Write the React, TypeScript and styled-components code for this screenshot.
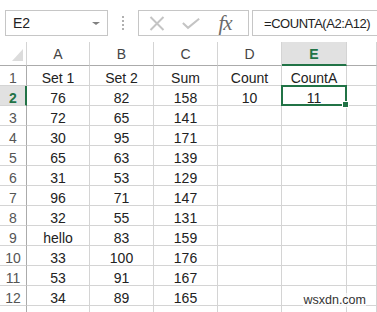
import React from "react";
import styled, { createGlobalStyle, css } from "styled-components";

const GlobalStyle = createGlobalStyle`
  html, body {
    margin: 0;
    padding: 0;
    background: #fff;
    overflow: hidden;
  }
  body {
    font-family: "Liberation Sans", Arial, sans-serif;
    color: #222;
  }
`;

const GREEN = "#217346";
const GRID = "#d4d4d4";

const Page = styled.div`
  position: relative;
  width: 377px;
  height: 312px;
  overflow: hidden;
`;

const Toolbar = styled.div`
  display: flex;
  align-items: flex-start;
  height: 42px;
  padding-top: 10px;
  box-sizing: border-box;
`;

const NameBox = styled.div`
  margin-left: 5px;
  width: 103px;
  height: 26px;
  box-sizing: border-box;
  border: 1px solid #c6c6c6;
  display: flex;
  align-items: center;
  justify-content: space-between;
  padding: 0 6px 0 7px;
  font-size: 14px;
  color: #222;
`;

const DropArrow = styled.span`
  width: 0;
  height: 0;
  border-left: 4px solid transparent;
  border-right: 4px solid transparent;
  border-top: 3px solid #808080;
  margin-right: 1px;
`;

const Dots = styled.div`
  width: 30px;
  height: 26px;
  display: flex;
  flex-direction: column;
  align-items: center;
  justify-content: center;
  gap: 2px;
  & span {
    width: 2px;
    height: 2px;
    background: #b0b0b0;
  }
`;

const FxBox = styled.div`
  width: 111px;
  height: 26px;
  box-sizing: border-box;
  border: 1px solid #c6c6c6;
  display: flex;
  align-items: center;
  padding-left: 9px;
`;

const IconSlot = styled.div<{ $w: number; $gap?: number }>`
  width: ${(p) => p.$w}px;
  margin-left: ${(p) => p.$gap ?? 0}px;
  height: 24px;
  display: flex;
  align-items: center;
  justify-content: center;
`;

const Fx = styled.span`
  font-family: "Liberation Serif", "Times New Roman", serif;
  font-style: italic;
  font-size: 21px;
  color: #6a6a6a;
  line-height: 24px;
  letter-spacing: -1px;
`;

const FormulaInput = styled.div`
  flex: 1;
  margin-left: 3px;
  height: 26px;
  box-sizing: border-box;
  border: 1px solid #c6c6c6;
  border-right: none;
  display: flex;
  align-items: center;
  padding-left: 11px;
  font-size: 13px;
  letter-spacing: -0.45px;
  white-space: nowrap;
  color: #222;
`;

const Sheet = styled.div`
  display: grid;
  grid-template-columns: 27px 63px 64px 64px 64px 65px 1fr;
  grid-template-rows: 24px;
  grid-auto-rows: 20px;
`;

const HeaderCell = styled.div<{ $active?: boolean }>`
  box-sizing: border-box;
  border-right: 1px solid ${GRID};
  border-bottom: 1px solid #ababab;
  display: flex;
  align-items: flex-end;
  justify-content: center;
  padding-bottom: 3px;
  font-size: 14px;
  line-height: 16px;
  color: #444;
  ${(p) =>
    p.$active &&
    css`
      background: #e1e1e1;
      border-bottom: 2px solid ${GREEN};
      padding-bottom: 2px;
      color: ${GREEN};
      font-weight: bold;
    `}
`;

const Corner = styled.div`
  box-sizing: border-box;
  border-right: 1px solid ${GRID};
  border-bottom: 1px solid #ababab;
  display: flex;
  align-items: flex-end;
  justify-content: flex-end;
  padding: 0 3px 4px 0;
`;

const RowHead = styled.div<{ $active?: boolean }>`
  box-sizing: border-box;
  border-right: 1px solid #ababab;
  border-bottom: 1px solid ${GRID};
  display: flex;
  align-items: flex-end;
  justify-content: center;
  font-size: 14px;
  line-height: 14px;
  color: #555;
  ${(p) =>
    p.$active &&
    css`
      background: #e1e1e1;
      border-right: 2px solid ${GREEN};
      padding-left: 1px;
      color: ${GREEN};
      font-weight: bold;
    `}
`;

const Cell = styled.div<{ $selected?: boolean }>`
  position: relative;
  box-sizing: border-box;
  border-right: 1px solid ${GRID};
  border-bottom: 1px solid ${GRID};
  display: flex;
  align-items: flex-end;
  justify-content: center;
  font-size: 14px;
  line-height: 14px;
  color: #222;
  white-space: nowrap;
  ${(p) =>
    p.$selected &&
    css`
      &::after {
        content: "";
        position: absolute;
        top: -1px;
        left: -1px;
        right: -1px;
        bottom: -1px;
        border: 2px solid ${GREEN};
      }
      &::before {
        content: "";
        position: absolute;
        right: -3px;
        bottom: -3px;
        width: 5px;
        height: 5px;
        background: ${GREEN};
        border: 1px solid #fff;
        z-index: 1;
      }
    `}
`;

const Watermark = styled.div`
  position: absolute;
  right: 11px;
  bottom: 5px;
  font-size: 12.5px;
  color: #333;
  background: rgba(255, 255, 255, 0.6);
`;

const columns = ["A", "B", "C", "D", "E", ""];

const data: string[][] = [
  ["Set 1", "Set 2", "Sum", "Count", "CountA"],
  ["76", "82", "158", "10", "11"],
  ["72", "65", "141"],
  ["30", "95", "171"],
  ["65", "63", "139"],
  ["31", "53", "129"],
  ["96", "71", "147"],
  ["32", "55", "131"],
  ["hello", "83", "159"],
  ["33", "100", "176"],
  ["53", "91", "167"],
  ["34", "89", "165"],
];

const CrossIcon = () => (
  <svg width="16" height="15" viewBox="0 0 16 15">
    <path d="M1.5 1 L14.5 14 M14.5 1 L1.5 14" stroke="#c4c4c4" strokeWidth="2" fill="none" />
  </svg>
);

const CheckIcon = () => (
  <svg width="21" height="13" viewBox="0 0 21 13">
    <path d="M1 6 L7 11.5 L20 1" stroke="#c4c4c4" strokeWidth="2.4" fill="none" />
  </svg>
);

const CornerTriangle = () => (
  <svg width="11" height="12" viewBox="0 0 11 12">
    <polygon points="11,0 11,12 0,12" fill="#dcdcdc" />
  </svg>
);

export default function App() {
  return (
    <Page>
      <GlobalStyle />
      <Toolbar>
        <NameBox>
          E2
          <DropArrow />
        </NameBox>
        <Dots>
          <span />
          <span />
          <span />
          <span />
        </Dots>
        <FxBox>
          <IconSlot $w={18}>
            <CrossIcon />
          </IconSlot>
          <IconSlot $w={18} $gap={16}>
            <CheckIcon />
          </IconSlot>
          <IconSlot $w={22} $gap={14}>
            <Fx>fx</Fx>
          </IconSlot>
        </FxBox>
        <FormulaInput>=COUNTA(A2:A12)</FormulaInput>
      </Toolbar>
      <Sheet>
        <Corner>
          <CornerTriangle />
        </Corner>
        {columns.map((c, i) => (
          <HeaderCell key={i} $active={c === "E"}>
            {c}
          </HeaderCell>
        ))}
        {data.map((row, r) => (
          <React.Fragment key={r}>
            <RowHead $active={r === 1}>{r + 1}</RowHead>
            {columns.map((_, c) => (
              <Cell key={c} $selected={r === 1 && c === 4}>
                {row[c] ?? ""}
              </Cell>
            ))}
          </React.Fragment>
        ))}
        {/* row 13 only shows its top edge in the window */}
        <RowHead />
        {columns.map((_, c) => (
          <Cell key={`last-${c}`} />
        ))}
      </Sheet>
      <Watermark>wsxdn.com</Watermark>
    </Page>
  );
}
